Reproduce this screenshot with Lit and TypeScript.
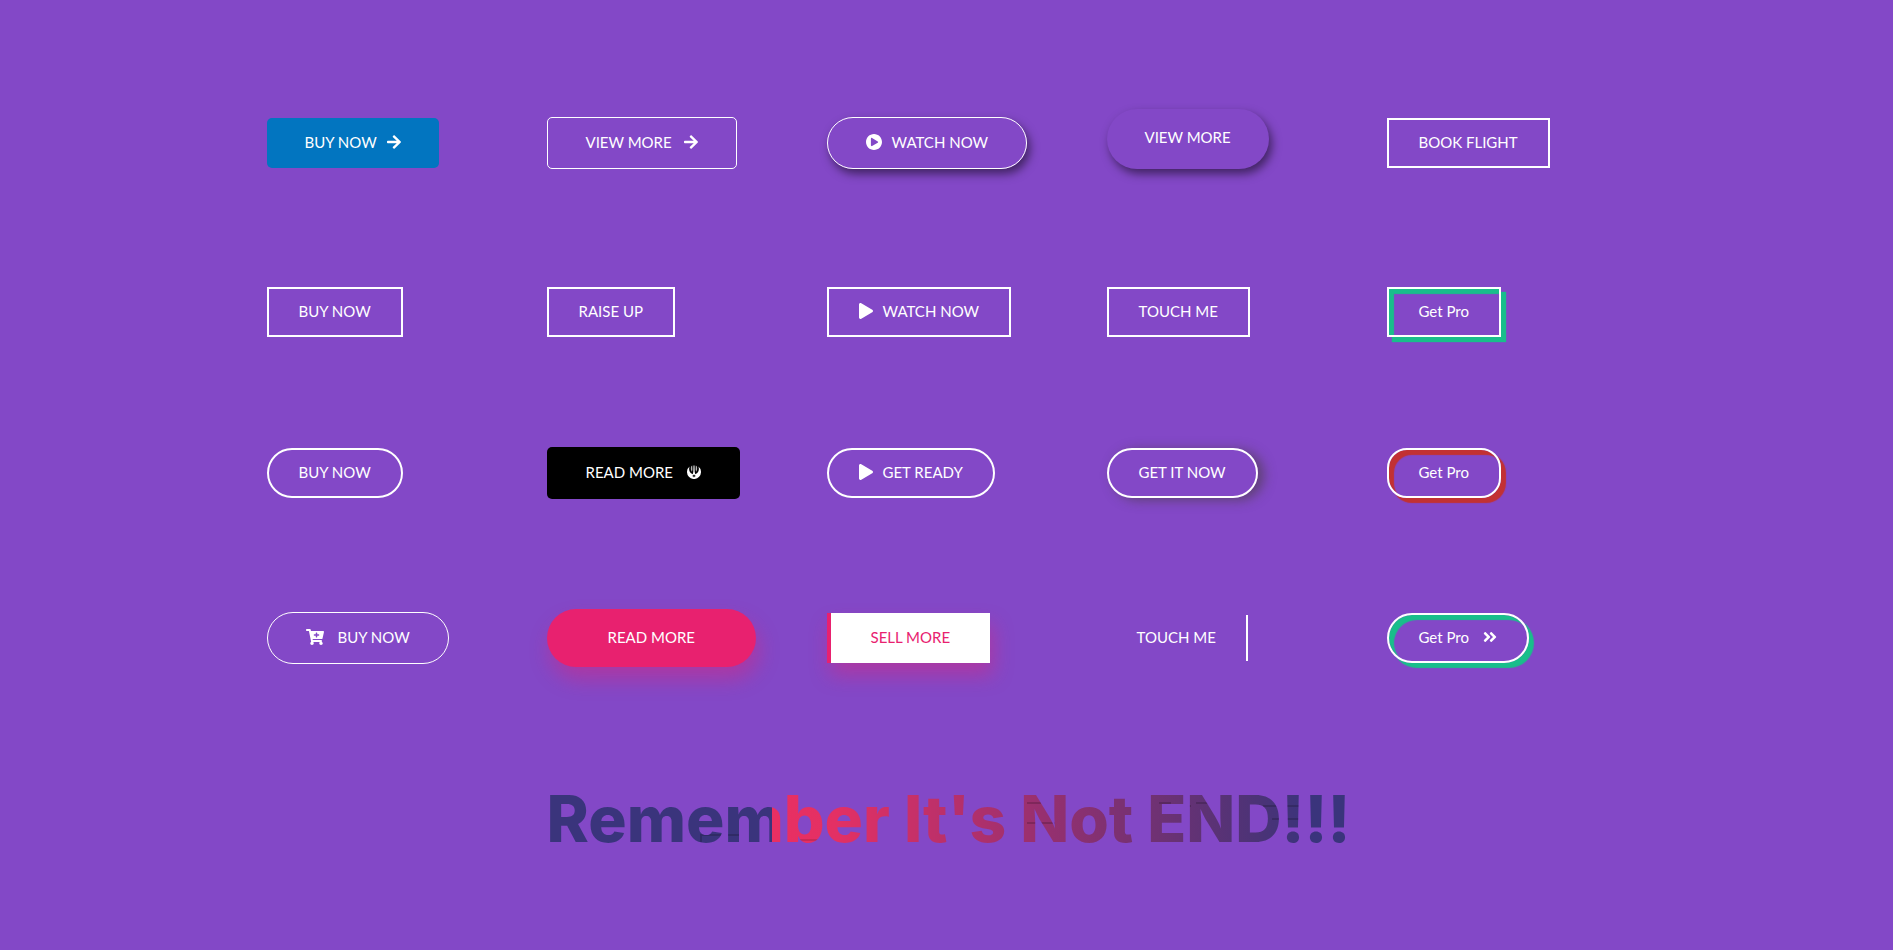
import { LitElement, html, css, svg, nothing, type TemplateResult } from "lit";
import { customElement, property } from "lit/decorators.js";
import { classMap } from "lit/directives/class-map.js";

type IconName = "arrow" | "circlePlay" | "play" | "jedi" | "cart" | "angles";

interface Icon {
  viewBox: string;
  width: number;
  height: number;
  body: TemplateResult;
}

const ICONS: Record<IconName, Icon> = {
  arrow: {
    viewBox: "0 32 448 448",
    width: 14,
    height: 14,
    body: svg`<path d="M190.500 66.900l22.200-22.200c9.400-9.400 24.600-9.400 33.900 0L441 239c9.400 9.400 9.400 24.600 0 33.900L246.600 467.300c-9.400 9.400-24.600 9.400-33.900 0l-22.200-22.200c-9.500-9.500-9.300-25 .4-34.300L311.400 296H24c-13.300 0-24-10.700-24-24v-32c0-13.300 10.700-24 24-24h287.400L190.900 101.200c-9.800-9.300-10-24.800-.4-34.300z"/>`,
  },
  circlePlay: {
    viewBox: "8 8 496 496",
    width: 16,
    height: 16,
    body: svg`<path d="M256 8C119 8 8 119 8 256s111 248 248 248 248-111 248-248S393 8 256 8zm115.700 272l-176 101c-15.800 8.800-35.700-2.500-35.700-21V152c0-18.400 19.800-29.800 35.700-21l176 107c16.400 9.200 16.400 32.900 0 42z"/>`,
  },
  play: {
    viewBox: "0 0 448 512",
    width: 14,
    height: 16,
    body: svg`<path d="M424.400 214.700L72.400 6.600C43.800-10.300 0 6.100 0 47.900V464c0 37.500 40.700 60.100 72.400 41.300l352-208c31.400-18.500 31.500-64.100 0-82.600z"/>`,
  },
  jedi: {
    viewBox: "0 0 14 14",
    width: 14,
    height: 14,
    body: svg`<path d="M2.600 1.600A7 7 0 1 0 11.400 1.600C12.300 4 11.900 6.400 10.300 8L8.300 9.300 7.700 7 7.500 1 7 0 6.500 1 6.300 7 5.700 9.300 3.700 8C2.100 6.400 1.700 4 2.600 1.600zM7 9l.4 1.200 1.300-.3-.9 1 .9 1-1.300-.3L7 12.800l-.4-1.200-1.300.3.9-1-.9-1 1.300.3z" fill-rule="evenodd"/><path d="M4.200 1.200l1-.6.2 3.800-.5 2.400C3.700 5 3.600 3.200 4.200 1.200zM9.800 1.200l-1-.6-.2 3.800.5 2.400C10.300 5 10.400 3.200 9.800 1.200z" opacity=".7"/>`,
  },
  cart: {
    viewBox: "0 0 576 512",
    width: 18,
    height: 16,
    body: svg`<path d="M504.700 320H211.600l6.500 32h268.400c15.400 0 26.800 14.300 23.400 29.300l-5.500 24.300c18.700 9.100 31.600 28.200 31.600 50.400 0 31.200-25.500 56.400-56.800 56-29.800-.4-54.400-24.600-55.200-54.400-.4-16.300 6.100-31 16.800-41.500H231.200C241.600 426.200 248 440.400 248 456c0 31.800-26.500 57.400-58.500 55.900-28.500-1.300-51.800-24.400-53.300-52.900-1.200-22 10.400-41.500 28.100-51.600L93.900 64H24C10.700 64 0 53.300 0 40V24C0 10.700 10.700 0 24 0h102.500c11.400 0 21.200 8 23.500 19.200L159.200 64H552c15.400 0 26.800 14.300 23.400 29.300l-47.300 208C525.600 312.200 515.900 320 504.700 320zM408 168h-48v-40c0-8.800-7.200-16-16-16h-16c-8.800 0-16 7.200-16 16v40h-48c-8.800 0-16 7.200-16 16v16c0 8.800 7.200 16 16 16h48v40c0 8.800 7.200 16 16 16h16c8.800 0 16-7.200 16-16v-40h48c8.800 0 16-7.200 16-16v-16c0-8.800-7.200-16-16-16z"/>`,
  },
  angles: {
    viewBox: "0 64 448 384",
    width: 14,
    height: 12,
    body: svg`<path d="M224.300 273l-136 136c-9.400 9.400-24.600 9.400-33.900 0l-22.600-22.600c-9.400-9.400-9.400-24.600 0-33.900l96.400-96.400-96.400-96.400c-9.400-9.400-9.400-24.600 0-33.900L54.300 103c9.400-9.400 24.600-9.400 33.900 0l136 136c9.500 9.400 9.500 24.600.1 34zm192-34l-136-136c-9.400-9.400-24.600-9.400-33.900 0l-22.600 22.600c-9.400 9.400-9.400 24.600 0 33.900l96.400 96.400-96.400 96.400c-9.400 9.400-9.400 24.600 0 33.900l22.600 22.600c9.400 9.400 24.600 9.400 33.900 0l136-136c9.400-9.200 9.400-24.400 0-33.800z"/>`,
  },
};

interface Item {
  label: string;
  look: string;
  before?: IconName;
  after?: IconName;
}

const ROWS: Item[][] = [
  [
    { label: "BUY NOW", look: "blue", after: "arrow" },
    { label: "VIEW MORE", look: "thin soft mid", after: "arrow" },
    { label: "WATCH NOW", look: "thin pill shade", before: "circlePlay" },
    { label: "VIEW MORE", look: "raised shade" },
    { label: "BOOK FLIGHT", look: "" },
  ],
  [
    { label: "BUY NOW", look: "" },
    { label: "RAISE UP", look: "" },
    { label: "WATCH NOW", look: "", before: "play" },
    { label: "TOUCH ME", look: "" },
    { label: "Get Pro", look: "offset" },
  ],
  [
    { label: "BUY NOW", look: "pill" },
    { label: "READ MORE", look: "black wide", after: "jedi" },
    { label: "GET READY", look: "pill", before: "play" },
    { label: "GET IT NOW", look: "pill side" },
    { label: "Get Pro", look: "offset round red" },
  ],
  [
    { label: "BUY NOW", look: "thin pill wide", before: "cart" },
    { label: "READ MORE", look: "pink" },
    { label: "SELL MORE", look: "white" },
    { label: "TOUCH ME", look: "bar" },
    { label: "Get Pro", look: "offset pill wide", after: "angles" },
  ],
];

@customElement("fancy-button")
export class FancyButton extends LitElement {
  @property({ attribute: false }) item!: Item;

  static styles = css`
    :host {
      display: flex;
    }
    .btn {
      display: inline-flex;
      align-items: center;
      gap: 10px;
      margin: 0;
      padding: 12px 30px 14px;
      border: 2px solid #fff;
      border-radius: 0;
      background: transparent;
      color: #fff;
      font: 400 15px/20px Lato, "Open Sans", sans-serif;
      white-space: nowrap;
      cursor: pointer;
    }
    .mid {
      gap: 12px;
    }
    .wide {
      gap: 14px;
    }
    .thin {
      padding: 14px 38px 16px;
      border-width: 1px;
    }
    .soft {
      border-radius: 5px;
    }
    .pill {
      border-radius: 26px;
    }
    .blue {
      padding: 14px 38px 16px;
      border: 0;
      border-radius: 5px;
      background: #0275c0;
    }
    .black {
      padding: 15px 39px 17px;
      border: 0;
      border-radius: 5px;
      background: #000;
    }
    .shade {
      box-shadow: 3px 5px 10px rgba(0, 0, 0, 0.5);
    }
    .side {
      box-shadow: 6px 2px 12px rgba(70, 60, 60, 0.6);
    }
    .raised {
      padding: 18px 38px 22px;
      border: 0;
      border-radius: 30px;
    }
    .offset {
      box-shadow: 5px 5px 1px #19be8b, inset 5px 5px 1px #19be8b;
    }
    .round {
      border-radius: 20px;
    }
    .red {
      box-shadow: 5px 5px 1px #c23133, inset 5px 5px 1px #c23133;
    }
    .pink {
      padding: 18px 61px 20px;
      border: 0;
      border-radius: 29px;
      background: #e8216f;
      box-shadow: 3px 12px 20px rgba(232, 33, 111, 0.4);
    }
    .white {
      padding: 14px 40px 16px;
      border: 0;
      border-left: 4px solid #e8216f;
      background: #fff;
      color: #e8216f;
      box-shadow: 3px 12px 20px rgba(232, 33, 111, 0.4);
    }
    .bar {
      border-width: 0 2px 0 0;
    }
    svg {
      display: block;
      flex: none;
      fill: currentColor;
    }
  `;

  private icon(name?: IconName) {
    if (!name) return nothing;
    const { viewBox, width, height, body } = ICONS[name];
    return html`<svg viewBox=${viewBox} width=${width} height=${height} aria-hidden="true">${body}</svg>`;
  }

  render() {
    const { label, look, before, after } = this.item;
    const classes: Record<string, boolean> = { btn: true };
    for (const name of look.split(" ").filter(Boolean)) classes[name] = true;
    return html`<button type="button" class=${classMap(classes)}>
      ${this.icon(before)}<span>${label}</span>${this.icon(after)}
    </button>`;
  }
}

@customElement("app-root")
export class AppRoot extends LitElement {
  static styles = css`
    :host {
      display: block;
      box-sizing: border-box;
      min-height: 100vh;
      padding: 109px 0 80px;
      background: #8348c7;
    }
    .page {
      max-width: 1400px;
      margin: 0 auto;
    }
    .rows {
      display: grid;
      gap: 109px;
    }
    .row {
      display: grid;
      grid-template-columns: repeat(5, 1fr);
      align-items: center;
      min-height: 52px;
    }
    .row:first-child {
      min-height: 68px;
    }
    .row:last-child {
      min-height: 60px;
    }
    .cell {
      padding-left: 20px;
    }
    .top {
      align-self: start;
    }
    .title {
      width: fit-content;
      margin: 112px 0 0 calc(20% + 20px);
      color: transparent;
      background:
        linear-gradient(#0000002c, #0000002c) 153px 54px / 43px 2px no-repeat,
        linear-gradient(#0000002c, #0000002c) 153px 56px / 2px 6px no-repeat,
        linear-gradient(#00000020, #00000020) 253px 59px / 24px 2px no-repeat,
        linear-gradient(#0000002c, #0000002c) 480px 22px / 14px 2px no-repeat,
        linear-gradient(#0000002c, #0000002c) 480px 42px / 28px 2px no-repeat,
        linear-gradient(#0000002c, #0000002c) 612px 22px / 12px 2px no-repeat,
        linear-gradient(#0000002c, #0000002c) 624px 25px / 20px 2px no-repeat,
        linear-gradient(#0000002c, #0000002c) 649px 22px / 12px 2px no-repeat,
        linear-gradient(#0000002c, #0000002c) 716px 25px / 42px 2px no-repeat,
        linear-gradient(#0000002c, #0000002c) 725px 38px / 33px 2px no-repeat,
        linear-gradient(90deg, #3a347c 28%, #e92f62 28%, #e33064 36%, #96306f 62%, #4a3377 89%, #3a347c 95%);
      -webkit-background-clip: text;
      background-clip: text;
      font: 800 64px/78px Inter, "Open Sans", sans-serif;
    }
  `;

  render() {
    return html`
      <main class="page">
        <div class="rows">
          ${ROWS.map(
            (row) => html`<div class="row">
              ${row.map(
                (item) => html`<div class=${classMap({ cell: true, top: item.look.includes("raised") })}>
                  <fancy-button .item=${item}></fancy-button>
                </div>`,
              )}
            </div>`,
          )}
        </div>
        <h1 class="title">Remember It's Not END!!!</h1>
      </main>
    `;
  }
}
